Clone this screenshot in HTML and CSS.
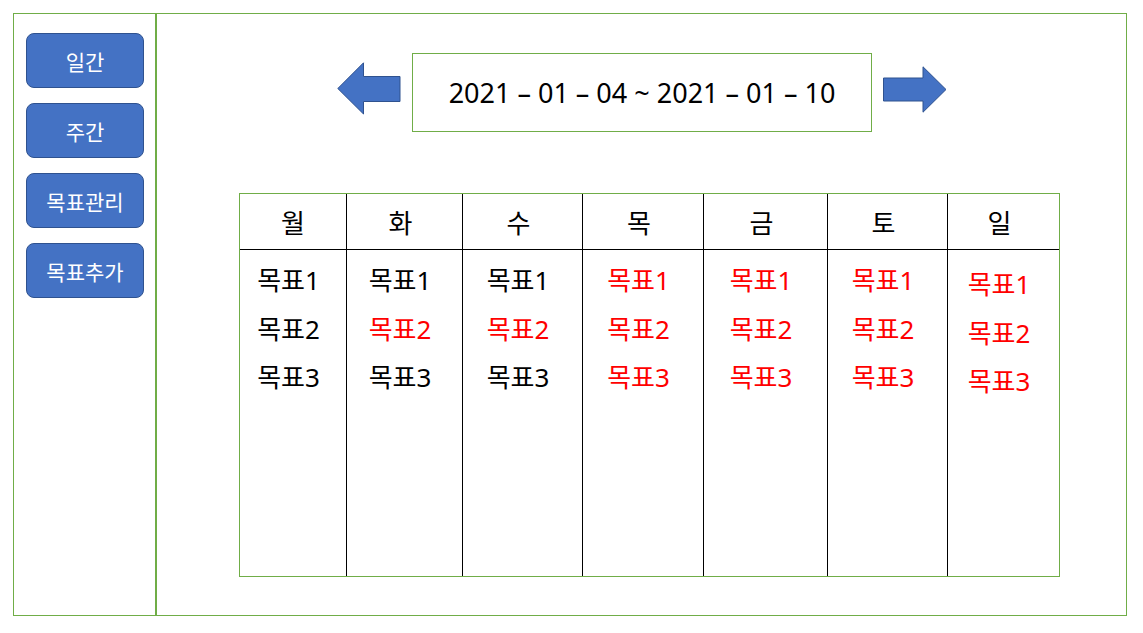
FILE: index.html
```html
<!DOCTYPE html>
<html lang="ko">
<head>
  <meta charset="UTF-8">
  <title>주간 목표</title>
  <link rel="stylesheet" href="styles.css">
</head>
<body>
  <div class="frame">
    <!-- Menu -->
    <nav class="sidebar">
      <button class="menu-button">일간</button>
      <button class="menu-button">주간</button>
      <button class="menu-button">목표관리</button>
      <button class="menu-button">목표추가</button>
    </nav>

    <main class="content">
      <!-- Week picker -->
      <div class="week-nav">
        <svg class="arrow arrow-left" width="64" height="53" viewBox="0 0 64 53">
          <path d="M0.8 26.5 L26.5 0.8 V14.5 H63 V39.5 H26.5 V52 Z" />
        </svg>
        <div class="date-box">2021 – 01 – 04 ~ 2021 – 01 – 10</div>
        <svg class="arrow arrow-right" width="64" height="47" viewBox="0 0 64 47">
          <path d="M0.5 12 H40 V0.8 L63 23.5 L40 46.2 V35 H0.5 Z" />
        </svg>
      </div>

      <!-- Week table -->
      <div class="week">
        <div class="day">
          <div class="day-name day-first">월</div>
          <ul class="goals">
            <li>목표1</li>
            <li>목표2</li>
            <li>목표3</li>
          </ul>
        </div>
        <div class="day">
          <div class="day-name">화</div>
          <ul class="goals">
            <li>목표1</li>
            <li class="missed">목표2</li>
            <li>목표3</li>
          </ul>
        </div>
        <div class="day">
          <div class="day-name">수</div>
          <ul class="goals">
            <li>목표1</li>
            <li class="missed">목표2</li>
            <li>목표3</li>
          </ul>
        </div>
        <div class="day">
          <div class="day-name">목</div>
          <ul class="goals">
            <li class="missed">목표1</li>
            <li class="missed">목표2</li>
            <li class="missed">목표3</li>
          </ul>
        </div>
        <div class="day">
          <div class="day-name">금</div>
          <ul class="goals">
            <li class="missed">목표1</li>
            <li class="missed">목표2</li>
            <li class="missed">목표3</li>
          </ul>
        </div>
        <div class="day">
          <div class="day-name">토</div>
          <ul class="goals">
            <li class="missed">목표1</li>
            <li class="missed">목표2</li>
            <li class="missed">목표3</li>
          </ul>
        </div>
        <div class="day">
          <div class="day-name">일</div>
          <ul class="goals goals-low">
            <li class="missed">목표1</li>
            <li class="missed">목표2</li>
            <li class="missed">목표3</li>
          </ul>
        </div>
      </div>
    </main>
  </div>
</body>
</html>
```

FILE: styles.css
```css
* {
  margin: 0;
  padding: 0;
  box-sizing: border-box;
}

body, html {
  width: 100%;
  height: 100%;
  background: #fff;
  font-family: "Noto Sans", "Noto Sans CJK KR", sans-serif;
  color: #000;
}

.frame {
  display: flex;
  margin: 13px;
  width: 1114px;
  height: 603px;
  border: 1px solid #70ad47;
}

/* Menu */
.sidebar {
  width: 143px;
  border-right: 2px solid #70ad47;
  display: flex;
  flex-direction: column;
  gap: 15px;
  padding: 19px 0 0 12px;
}

.menu-button {
  width: 118px;
  height: 55px;
  background: #4472c4;
  border: 1px solid #2f528f;
  border-radius: 8px;
  color: #fff;
  font-family: "Noto Sans CJK KR", sans-serif;
  font-size: 21px;
  cursor: pointer;
}

.content {
  flex: 1;
  display: flex;
  flex-direction: column;
}

/* Week picker */
.week-nav {
  display: flex;
  justify-content: center;
  align-items: center;
  gap: 11px;
  margin-top: 39px;
  padding-left: 1px;
}

.arrow path {
  fill: #4472c4;
  stroke: #2f528f;
  stroke-width: 1;
}

.arrow-left {
  margin-top: -8px;
}

.arrow-right {
  margin-top: -7px;
}

.date-box {
  width: 460px;
  height: 79px;
  border: 1px solid #70ad47;
  display: flex;
  align-items: center;
  justify-content: center;
  font-size: 27px;
}

/* Week table */
.week {
  display: grid;
  grid-template-columns: 106px 116px 120px 121px 124px 120px 112px;
  width: 821px;
  height: 384px;
  margin: 61px 0 0 82px;
  border: 1px solid #70ad47;
}

.day + .day {
  border-left: 1px solid #000;
}

.day-name {
  height: 56px;
  border-bottom: 1px solid #000;
  display: flex;
  align-items: center;
  justify-content: center;
  padding-right: 8px;
  font-family: "Noto Sans CJK KR", sans-serif;
  font-size: 26px;
}

.day-first {
  padding-right: 0;
}

.goals {
  list-style: none;
  padding: 6px 9px 0 0;
  text-align: center;
  font-size: 26px;
  line-height: 48.5px;
}

.goals-low {
  padding-top: 10px;
}

.missed {
  color: #ff0000;
}
```
